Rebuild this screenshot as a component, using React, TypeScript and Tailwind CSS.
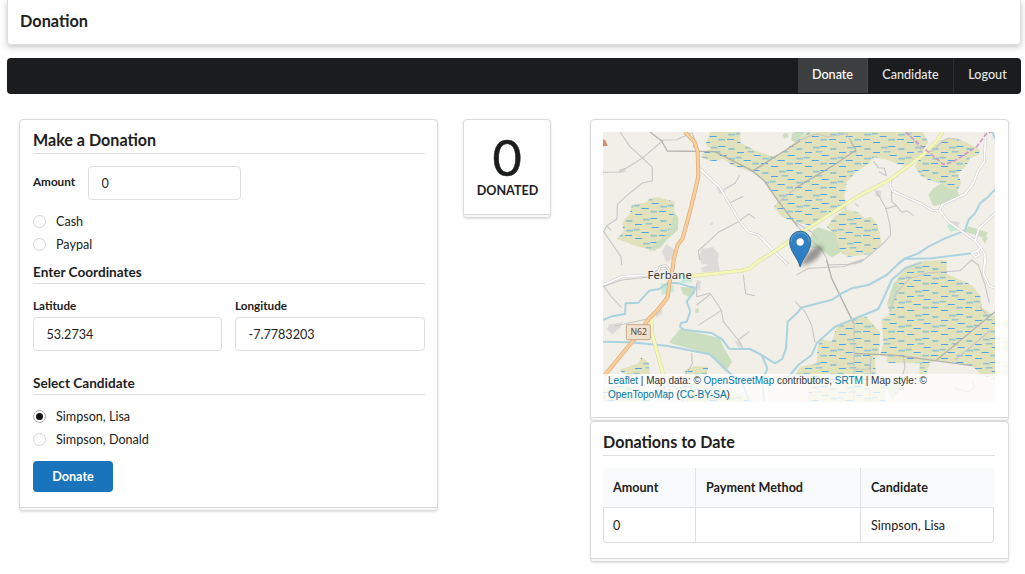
import React from 'react';

const bog = 'url(#bog)';

const bogs = [
  'M345 21L332 58L346 72L322 86L318 96L338 106L362 109L382 101L415 122L470 140L505 165L535 205L550 230L536 245L560 275L600 292L650 302L690 275L755 250L748 215L755 172L785 140L815 120L838 97L870 103L925 122L962 112L1000 52L984 21L640 21L585 62L560 86L530 94L480 76L437 54L435 21Z',
  'M1040 45L1080 38L1120 55L1155 75L1150 90L1125 100L1112 125L1090 145L1098 175L1088 197L1060 195L1040 175L1000 165L975 150L960 125L970 105L1000 80Z',
  'M722 270L750 253L790 262L808 280L830 275L850 305L860 355L830 387L760 395L735 380L722 330L695 305Z',
  'M110 240L155 232L165 220L190 217L238 230L238 262L232 300L215 345L180 378L130 365L65 342L85 320L82 290L105 265Z',
  'M910 455L930 425L970 410L1055 405L1055 448L1075 455L1130 480L1155 510L1162 548L1200 573L1200 765L1160 750L1130 723L1030 705L1005 715L992 750L972 750L975 715L875 713L875 695L855 692L865 655L862 605L858 582L885 570L876 535L895 480Z',
  'M770 582L795 575L815 575L835 600L855 620L852 692L840 695L842 760L870 780L870 831L640 831L640 770L600 750L615 725L665 715L667 675L675 640L710 650L725 605Z',
  'M73 735L130 715L140 695L162 715L165 750L95 755Z',
  'M265 737L300 723L340 725L335 750L280 765Z',
  'M24 790L90 778L165 800L165 831L24 831ZM250 770L340 780L440 810L480 831L260 831Z',
  'M980 417L1055 408L1055 405L980 408Z',
];
const greens = [
  'M600 21L634 21L600 52L588 45L592 24Z',
  'M562 28L578 24L580 36L568 41Z',
  'M238 262L250 278L249 316L217 343L195 370L160 378L185 352L222 320Z',
  'M655 315L670 307L720 324L737 382L710 397L672 371L635 365Z',
  'M1015 190L1040 175L1060 190L1085 195L1095 214L1055 235L1015 243L1000 210Z',
  'M1120 304L1178 322L1172 340L1110 320Z',
  'M255 612L375 639L382 660L411 710L392 741L345 688L222 653Z',
  'M256 485L300 490L298 505L282 517L264 507Z',
  'M895 475L914 463L908 510L890 540L877 533Z',
  'M870 770L930 755L925 788L890 826Z',
  'M1160 340L1180 337L1170 356Z',
  'M300 553L311 549L312 564L301 565Z',
];
const builtUp = [
  'M214 358L240 375L235 398L215 412L200 380Z',
  'M322 371L354 367L371 386L368 415L350 420L318 416L312 393Z',
  'M317 428L370 410L374 438L322 442Z',
  'M43 598L82 592L76 608L52 628L36 613Z',
  'M362 184L388 193L391 205L374 207Z',
  'M838 194L859 198L857 218L842 214Z',
  'M1068 287L1095 292L1088 305L1070 302Z',
  'M182 553L202 545L200 567L182 578Z',
  'M305 465L318 468L314 497L304 487Z',
  'M72 133L94 128L92 140L74 145Z',
  'M345 290L353 292L354 300L347 300Z',
  'M417 645L442 655L440 669L428 666Z',
];
const lanes = [
  'M75 21L105 65L144 100L172 127L172 168L142 174L95 212L67 238L66 282L35 302L26 320L78 395L80 420',
  'M35 302L48 316',
  'M24 142L70 141L100 126L144 98L205 45L245 44L288 24',
  'M290 21L298 40L296 68',
  'M608 305L680 375L695 400L698 420L760 418L805 403',
  'M388 193L420 175L434 151M402 235L445 214M430 290L462 267L480 280M430 290L370 322L310 378L314 405',
  'M546 235L613 181M765 45L752 21M600 50L665 26L695 35L760 26',
  'M932 21L960 50L985 85L1015 77L1040 50L1060 40L1080 42M835 108L850 128L868 130L874 152L852 140',
  'M845 200L873 250L885 300L887 330L865 355L800 410L775 418M889 190L890 230L904 242L920 262L934 257L956 272M904 242L870 252',
  'M24 485L80 465L170 455L186 435M24 480L48 514L80 548M60 603L160 581M305 540L347 507L379 555L385 590L430 645L443 668M310 601L378 557M430 645L463 620M305 475L305 515L345 505',
  'M290 685L292 716L268 755M445 450L452 506L480 512M605 450L640 430L745 425L805 405M777 595V831',
  'M1080 705L1187 615M778 733L823 733L828 691L823 831',
  'M925 692L930 725L915 780L900 805M600 530L630 560L650 600L660 652M885 560L905 500L945 460L1000 443L1095 437L1130 405L1150 420L1170 480L1183 535M1155 545L1175 570M1077 790L1118 800L1140 787L1130 765M780 235L791 244M600 292L650 321L666 342',
];
const rivers = [
  'M24 585L50 574L90 567L92 535L130 533L163 497L192 492L220 473L252 475L283 485L302 488L294 505L275 530L286 560L275 590L258 594L255 605L266 614L350 624L382 643L402 671L465 672L500 690L540 715L562 702L573 670L578 590L610 560L618 548L675 533L710 525L740 505L770 490L820 480L875 450L915 412L930 400L970 385L1000 365L1050 340L1110 317L1120 285L1140 265L1155 235L1180 215L1200 193',
  'M24 650L108 652L220 663L344 688L405 745L440 770L465 831',
  'M500 690L517 730L502 771L508 831M560 780L610 720L650 690L665 655L720 605L850 552L870 510L890 465L930 430L980 412M905 420L930 402L1010 400L1130 385',
  'M1192 21L1200 42',
];
const minorRoads = [
  'M313 130L375 188L432 286L460 321L490 330L540 382L580 420',
  'M1172 21L1168 110L1150 135L1135 175L1110 207L1040 240L1033 258L1010 255L978 236L893 198L885 182L887 160M1035 258L1060 290L1140 347L1160 372L1170 390L1170 420M1140 347L1152 310L1200 265',
  'M1130 383L1148 377L1160 365M1130 383L1140 397L1152 391L1148 377M1170 400L1165 445L1182 482L1200 490',
  'M24 480L80 455L155 450L185 430L220 430',
];
const motorway = 'M270 21L298 50L308 80L310 155L290 240L263 340L247 362L236 405L234 425L222 480L218 517L190 553L160 583L120 640L28 752';
const yellow = 'M1042 21L1028 45L986 88L885 164L790 213L628 317L530 385L488 410L465 430L440 437L290 453L236 448M169 575L171 625L210 770';
const sansMap = "font-['Noto_Sans',sans-serif]";

function MapView() {
  return (
    <div className="relative h-[270px] w-full overflow-hidden bg-[#f2efe9]">
      <svg viewBox="24 21 1176 810" className="block h-full w-full" fill="none" strokeLinejoin="round">
        <defs>
          <pattern id="bog" width="102" height="72" patternUnits="userSpaceOnUse" patternTransform="translate(12 6)">
            <rect width="102" height="72" fill="#e1e2bc" />
            <path d="M6 4.500H27M56 13.500H77M26 28.500H47M78 37.500H99M6 46.500H27M52 58.500H73" stroke="#4ba4ee" strokeWidth="3.500" />
            <path d="M38 2H58M82 23H102M2 20H20M52 38H72M30 62H50M82 66H100" stroke="#98c5cd" strokeWidth="5.500" />
          </pattern>
          <linearGradient id="pin" x1="0" y1="0" x2="0" y2="1">
            <stop offset="0" stopColor="#3883bf" />
            <stop offset="1" stopColor="#287bc7" />
          </linearGradient>
          <filter id="soft" x="-50%" y="-50%" width="200%" height="200%">
            <feGaussianBlur stdDeviation="7" />
          </filter>
        </defs>
        {bogs.map((d) => <path key={d} d={d} fill={bog} />)}
        {greens.map((d) => <path key={d} d={d} fill="#cbdfc0" />)}
        {builtUp.map((d) => <path key={d} d={d} fill="#dcdbd9" />)}
        <path d="M1055 300L1075 295L1088 316L1065 320ZM197 475L235 480L238 500L200 510ZM260 457L290 455L292 472L260 475Z" fill="#c5ebd6" />
        <g stroke="#c6c5c3" strokeWidth="3.2">
          {lanes.map((d) => <path key={d} d={d} />)}
        </g>
        <path d="M165 21L200 48L217 78L360 80L470 136L508 168L548 226L608 305M470 140L615 48M600 190L722 117L783 75L765 45M695 405L710 460L776 595M778 685L905 691L1130 722M1025 705L1200 560" stroke="#b3b1ab" strokeWidth="4" />
        <g stroke="#aad3df" strokeWidth="6">
          {rivers.map((d) => <path key={d} d={d} />)}
        </g>
        <g stroke="#cbcac8" strokeWidth="8">
          {minorRoads.map((d) => <path key={d} d={d} />)}
        </g>
        <g stroke="#ffffff" strokeWidth="5">
          {minorRoads.map((d) => <path key={d} d={d} />)}
        </g>
        <path d="M190 440L195 425L212 422L224 436" stroke="#c4c3c1" strokeWidth="8" />
        <path d="M190 440L195 425L212 422L224 436" stroke="#fff" strokeWidth="4" />
        <path d={yellow} stroke="#d3d8a4" strokeWidth="11.500" />
        <path d={yellow} stroke="#f5f8ba" strokeWidth="8.500" />
        <path d={motorway} stroke="#dba974" strokeWidth="12" />
        <path d={motorway} stroke="#f9cf9b" strokeWidth="8" />
        <path d="M932 21L975 60L1005 85L1045 118L1075 110L1145 65L1175 25L1190 21" stroke="#cf9bc6" strokeWidth="5" strokeDasharray="14 6" />
        <path d="M24 43L31 46L38 63H24Z" fill="#d08f60" />
        <rect x="94" y="599" width="72" height="45" rx="4" fill="#f0e1cf" stroke="#c9a98b" strokeWidth="3" />
        <text x="131" y="631" textAnchor="middle" fontSize="26" fill="#5c4a38" className={sansMap}>N62</text>
        <text x="224" y="461" textAnchor="middle" fontSize="34" fill="#3b3b3b" stroke="#f5f2ec" strokeWidth="5" paintOrder="stroke" textLength="133" className={sansMap}>Ferbane</text>
        <text x="213" y="805" textAnchor="middle" fontSize="24" fill="#999" className={sansMap}>R437</text>
        <path d="M616 424C630 385 655 365 675 362C692 366 680 390 650 412Z" fill="#000" opacity=".38" filter="url(#soft)" />
        <path d="M615 425C610 400 584 380 584 350A31 31 0 0 1 647 350C647 380 621 400 616 425Z" fill="url(#pin)" stroke="#2e6c97" strokeWidth="3" />
        <path d="M588 350A27.500 27.500 0 0 1 643 350" stroke="#629fce" strokeWidth="3" />
        <circle cx="615.500" cy="351" r="11" fill="#fff" />
      </svg>
      <div className="absolute inset-x-0 bottom-0 h-7 bg-white/75 pl-[5px] font-['Liberation_Sans',sans-serif] text-[10px] leading-[14px] whitespace-nowrap text-[#333]">
        <div><span className="text-[#0078a8]">Leaflet</span> | Map data: © <span className="text-[#0078a8]">OpenStreetMap</span> contributors, <span className="text-[#0078a8]">SRTM</span> | Map style: ©</div>
        <div><span className="text-[#0078a8]">OpenTopoMap</span> (<span className="text-[#0078a8]">CC-BY-SA</span>)</div>
      </div>
    </div>
  );
}

function Stacked({ className, children }: { className: string; children: React.ReactNode }) {
  return (
    <section className={`flex flex-col rounded-[4px] border border-[#d9dadb] bg-white shadow-[0_1px_2px_rgba(34,36,38,0.15)] ${className}`}>
      <div className="flex-1 pr-3 pl-[13px] pt-3">{children}</div>
      <div className="h-[3px] rounded-b-[3px] border-t border-[#d7d8d8] bg-[#f8f8f8]" />
    </section>
  );
}

function Radio({ label, checked = false }: { label: string; checked?: boolean }) {
  return (
    <label className="flex h-[23px] items-center">
      <span className={`flex size-[13px] items-center justify-center rounded-full border ${checked ? 'border-[#a9aaab]' : 'border-[#d4d4d5]'}`}>
        {checked && <span className="size-[7px] rounded-full bg-[#111]" />}
      </span>
      <span className="ml-[10px]">{label}</span>
    </label>
  );
}

const inputClass = 'h-[34px] rounded-[4px] border border-[#dededf] px-[12.500px] text-[12.600px] outline-none';

export default function App() {
  return (
    <div className="h-[574px] overflow-hidden bg-white pr-1 pl-[7px] font-['Lato',sans-serif] text-[12.600px] leading-[18px] text-[#212121]">
      <header className="flex h-[45px] items-center rounded-b-[4px] border border-t-0 border-[#dcdddd] pb-[2px] pl-3 shadow-[0_2px_4px_rgba(34,36,38,0.12),0_2px_9px_rgba(34,36,38,0.15)]">
        <h1 className="text-[16.300px] font-bold">Donation</h1>
      </header>
      <nav className="mt-[13px] flex h-9 justify-end overflow-hidden rounded-[4px] bg-[#1b1c1d] pb-px font-medium text-[#e8e8e8]">
        <a className="flex w-[70px] items-center justify-center border-r border-[#49494a] bg-[#3d3e3f] pb-[2px] text-white">Donate</a>
        <a className="flex w-[86px] items-center justify-center border-r border-[#2d2e2f] pb-[2px]">Candidate</a>
        <a className="flex w-[67px] items-center justify-center pb-[2px]">Logout</a>
      </nav>
      <main className="mt-[25px] flex items-start pl-3">
        <Stacked className="h-[392px] w-[419px]">
          <h2 className="h-[22px] border-b border-[#dededf] text-[16.100px] leading-[15px] font-bold">Make a Donation</h2>
          <div className="mt-3 flex h-[34px]">
            <label className="w-[55px] pt-[6px] text-[11.700px] font-bold">Amount</label>
            <input defaultValue="0" className={`${inputClass} w-[153px]`} />
          </div>
          <div className="mt-[10px]">
            <Radio label="Cash" />
            <Radio label="Paypal" />
          </div>
          <h3 className="mt-[7px] h-[21px] border-b border-[#dededf] text-[13.600px] leading-[18px] font-bold">Enter Coordinates</h3>
          <div className="mt-[12px] grid grid-cols-[189px_190px] gap-x-[13px]">
            <label className="h-[21px] text-[11.700px] font-bold">Latitude</label>
            <label className="h-[21px] text-[11.700px] font-bold">Longitude</label>
            <input defaultValue="53.2734" className={`${inputClass} w-full`} />
            <input defaultValue="-7.7783203" className={`${inputClass} w-full`} />
          </div>
          <h3 className="mt-[23px] h-[21px] border-b border-[#dededf] text-[13.600px] leading-[18px] font-bold">Select Candidate</h3>
          <div className="mt-[10px]">
            <Radio label="Simpson, Lisa" checked />
            <Radio label="Simpson, Donald" />
          </div>
          <button className="mt-[10px] h-[31px] w-20 rounded-[4px] bg-[#1a74bb] font-bold text-white">Donate</button>
        </Stacked>
        <Stacked className="ml-[25px] h-[99px] w-[88px]">
          <div className="-mr-3 -ml-[13px] flex flex-col items-center">
            <div className="h-[50px] text-[50.400px] leading-[50px] text-[#1b1c1d] [-webkit-text-stroke:0.5px_#1b1c1d]">0</div>
            <div className="pl-px leading-[18px] font-bold uppercase">Donated</div>
          </div>
        </Stacked>
        <div className="ml-[39px] w-[419px]">
          <Stacked className="h-[302px]">
            <div className="-ml-px w-[392px]"><MapView /></div>
          </Stacked>
          <Stacked className="h-[141px]">
            <h2 className="-ml-px h-[22px] w-[392px] border-b border-[#dededf] text-[16.100px] leading-[15px] font-bold">Donations to Date</h2>
            <table className="mt-3 -ml-px w-[391px] table-fixed border-separate border-spacing-0 text-left">
              <colgroup><col className="w-[93px]" /><col className="w-[165px]" /><col /></colgroup>
              <thead>
                <tr className="h-10 bg-[#f9fafb]">
                  <th className="rounded-tl-[4px] border-r border-b border-[#e1e2e3] pl-[10px] font-bold">Amount</th>
                  <th className="border-r border-b border-[#e1e2e3] pl-[10px] font-bold">Payment Method</th>
                  <th className="rounded-tr-[4px] border-b border-[#e1e2e3] pl-[10px] font-bold">Candidate</th>
                </tr>
              </thead>
              <tbody>
                <tr className="h-[35px]">
                  <td className="rounded-bl-[4px] border-r border-b border-l border-[#dededf] pt-[2px] pl-[9px]">0</td>
                  <td className="border-r border-b border-[#dededf]" />
                  <td className="rounded-br-[4px] border-r border-b border-[#dededf] pt-[2px] pl-[10px]">Simpson, Lisa</td>
                </tr>
              </tbody>
            </table>
          </Stacked>
        </div>
      </main>
    </div>
  );
}
